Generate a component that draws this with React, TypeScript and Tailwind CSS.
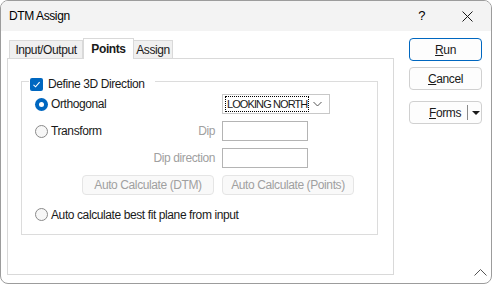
import type { FC, ReactNode } from 'react';

const font = { fontFamily: '"Liberation Sans", Arial, sans-serif' };

const Radio: FC<{ checked?: boolean }> = ({ checked }) =>
  checked ? (
    <span className="flex h-[13px] w-[13px] shrink-0 items-center justify-center rounded-full bg-[#0067c0]">
      <span className="h-[5px] w-[5px] rounded-full bg-white" />
    </span>
  ) : (
    <span className="h-[13px] w-[13px] shrink-0 rounded-full border border-[#8a8a8a] bg-[#f7f7f7]" />
  );

const DisabledButton: FC<{ children: ReactNode }> = ({ children }) => (
  <div className="flex h-[20px] w-[132px] items-center justify-center rounded-[4px] border border-[#e5e5e5] bg-[#f9f9f9] text-[12px] text-[#a0a0a0]">
    {children}
  </div>
);

const Field: FC = () => (
  <div className="h-[20px] w-[86px] border border-[#b4b4b4] bg-white" />
);

const App: FC = () => {
  return (
    <div
      className="flex h-[284px] w-[492px] flex-col overflow-hidden rounded-[8px] border border-[#9c9c9c] bg-white text-[12px] tracking-[-0.4px] text-[#1a1a1a]"
      style={font}
    >
      {/* Title bar */}
      <div className="flex h-[30px] shrink-0 items-center bg-[#f3f3f3]">
        <span className="ml-[8px] text-[12px] text-black">DTM Assign</span>
        <span className="ml-auto mr-[37px] text-[13px] text-black">?</span>
        <svg width="11" height="11" viewBox="0 0 11 11" className="mr-[18px]">
          <path d="M0.5 0.5 L10.5 10.5 M10.5 0.5 L0.5 10.5" stroke="#1a1a1a" strokeWidth="1" />
        </svg>
      </div>

      {/* Body */}
      <div className="relative flex flex-1">
        {/* Left: tabs */}
        <div className="ml-[6px] mt-[7px] flex w-[387px] flex-col">
          <div className="flex h-[20px] items-end pl-[2px]">
            <div className="flex h-[18px] w-[74px] items-center justify-center border border-b-0 border-[#d9d9d9] bg-[#f0f0f0]">
              Input/Output
            </div>
            <div className="relative z-10 -mb-px flex h-[21px] w-[51px] items-center justify-center border border-b-0 border-[#d9d9d9] bg-white font-bold">
              Points
            </div>
            <div className="flex h-[18px] w-[39px] items-center justify-center border border-b-0 border-l-0 border-[#d9d9d9] bg-[#f0f0f0]">
              Assign
            </div>
          </div>
          <div className="h-[217px] border border-[#d9d9d9] bg-white pl-[13px] pt-[22px]">
            {/* Group box */}
            <div className="relative w-[357px] border border-[#dcdcdc] pb-[13px] pl-[13px] pt-[12px]">
              <div className="absolute left-[7px] top-[-7px] flex items-center gap-[5px] bg-white px-[1px]">
                <span className="flex h-[13px] w-[13px] items-center justify-center rounded-[2px] bg-[#0067c0]">
                  <svg width="9" height="9" viewBox="0 0 9 9">
                    <path d="M1.5 4.8 L3.6 6.8 L7.6 2.2" fill="none" stroke="white" strokeWidth="1.1" />
                  </svg>
                </span>
                <span className="pr-[10px]">Define 3D Direction</span>
              </div>

              <div className="flex h-[20px] items-center">
                <div className="flex w-[180px] items-center gap-[3px]">
                  <Radio checked />
                  <span>Orthogonal</span>
                </div>
                <div className="ml-[7px] flex h-[20px] w-[108px] items-center border border-[#c8c8c8] bg-white pl-[2px]">
                  <span className="whitespace-nowrap border border-dotted border-black px-[1px] text-[11px] leading-[14px] tracking-[-0.9px]">
                    LOOKING NORTH
                  </span>
                  <svg width="9" height="6" viewBox="0 0 9 6" className="ml-auto mr-[7px] shrink-0">
                    <path d="M0.5 1 L4.5 5 L8.5 1" fill="none" stroke="#555" strokeWidth="1" />
                  </svg>
                </div>
              </div>

              <div className="mt-[7px] flex h-[20px] items-center">
                <div className="flex w-[180px] items-center gap-[3px]">
                  <Radio />
                  <span>Transform</span>
                  <span className="ml-auto text-[#a0a0a0]">Dip</span>
                </div>
                <div className="ml-[7px]">
                  <Field />
                </div>
              </div>

              <div className="mt-[7px] flex h-[20px] items-center">
                <div className="w-[180px] text-right text-[#a0a0a0]">Dip direction</div>
                <div className="ml-[7px]">
                  <Field />
                </div>
              </div>

              <div className="mt-[7px] ml-[47px] flex gap-[8px]">
                <DisabledButton>Auto Calculate (DTM)</DisabledButton>
                <DisabledButton>Auto Calculate (Points)</DisabledButton>
              </div>

              <div className="mt-[13px] flex h-[13px] items-center gap-[3px]">
                <Radio />
                <span>Auto calculate best fit plane from input</span>
              </div>
            </div>
          </div>
        </div>

        {/* Right: buttons */}
        <div className="ml-[15px] mt-[7px] flex w-[73px] flex-col">
          <div className="flex h-[23px] items-center justify-center rounded-[4px] border border-[#0067c0] bg-[#fdfdfd]">
            <span>
              <span className="underline">R</span>un
            </span>
          </div>
          <div className="mt-[6px] flex h-[23px] items-center justify-center rounded-[4px] border border-[#d0d0d0] bg-[#fdfdfd]">
            <span>
              <span className="underline">C</span>ancel
            </span>
          </div>
          <div className="mt-[11px] flex h-[23px] items-center rounded-[4px] border border-[#d0d0d0] bg-[#fdfdfd]">
            <span className="ml-[19px]">
              <span className="underline">F</span>orms
            </span>
            <span className="ml-[6px] h-[15px] w-px bg-[#8a8a8a]" />
            <svg width="8" height="4" viewBox="0 0 8 4" className="ml-[4px]">
              <path d="M0 0 L8 0 L4 4 Z" fill="#1a1a1a" />
            </svg>
          </div>
        </div>

        {/* Resize chevron */}
        <svg width="13" height="7" viewBox="0 0 13 7" className="absolute bottom-[7px] right-[4px]">
          <path d="M0.5 6.5 L6.5 0.5 L12.5 6.5" fill="none" stroke="#555" strokeWidth="1" />
        </svg>
      </div>
    </div>
  );
};

export default App;
